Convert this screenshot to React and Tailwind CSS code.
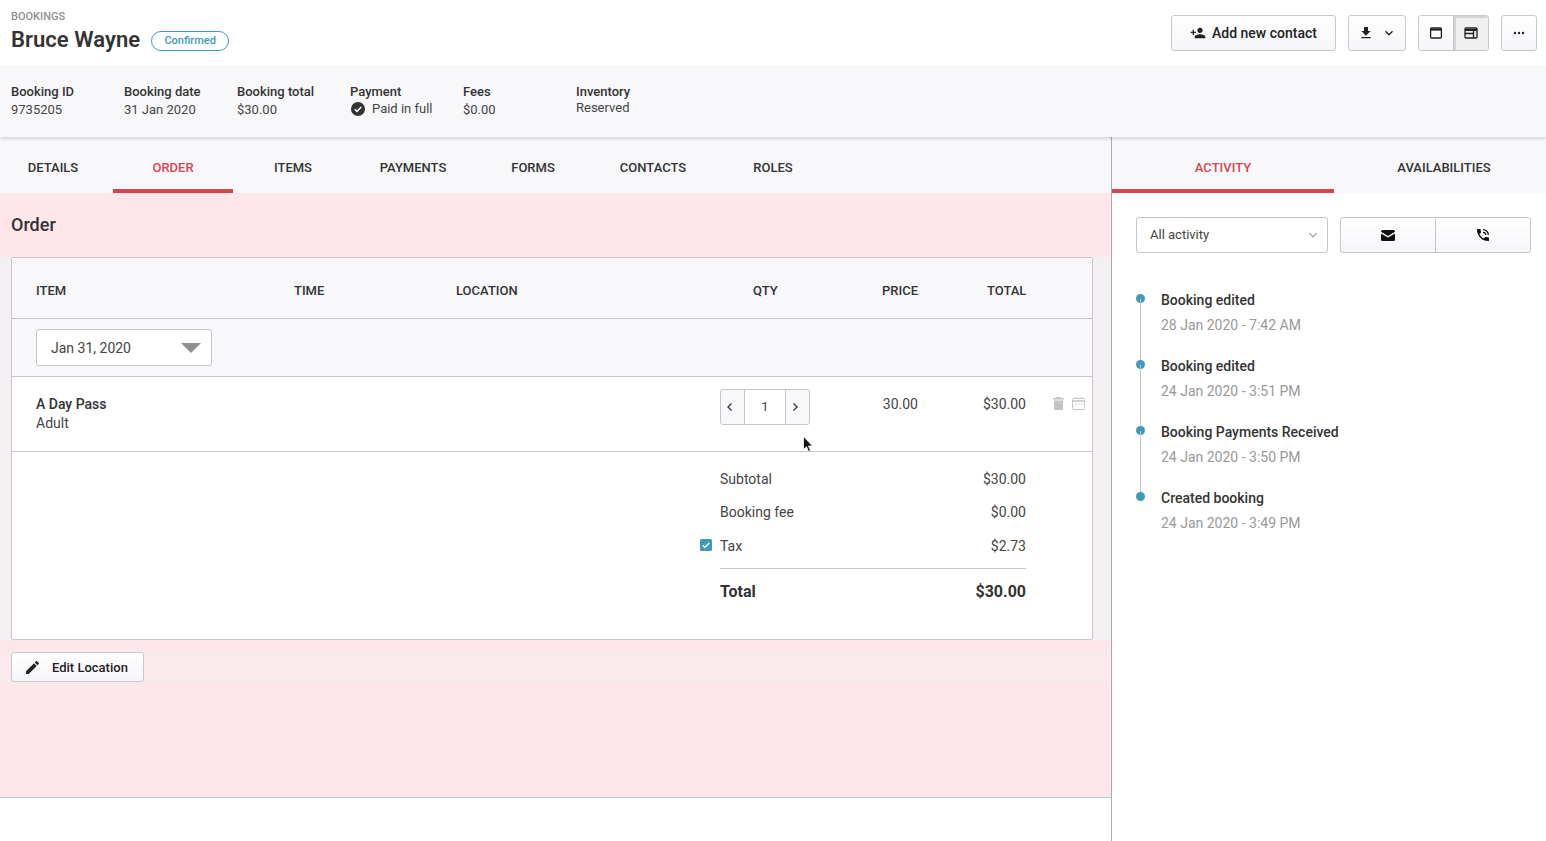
import React from "react";

function Meta({ label, children, w = "w-[113px]" }) {
  return (
    <div className={`${w} shrink-0`}>
      <div className="text-[13px] leading-[18px] font-medium text-[#333]">{label}</div>
      <div className="text-[13px] leading-[18px] text-[#444]">{children}</div>
    </div>
  );
}

function Tab({ children, active, w = "w-[120px]" }) {
  return (
    <div className={`${w} h-full flex items-center justify-center text-[13px] font-medium pt-[10px] border-b-4 ${active ? "border-[#d9434e] text-[#d9434e]" : "border-transparent text-[#333]"}`}>
      {children}
    </div>
  );
}

function Btn({ children, className = "" }) {
  return (
    <div className={`h-[36px] flex items-center justify-center border border-[#c6c8cc] rounded-[3px] bg-gradient-to-b from-white to-[#f6f6fa] ${className}`}>
      {children}
    </div>
  );
}

function Activity({ title, date, last }) {
  return (
    <div className="relative pl-[25px] h-[66px]">
      <div className="absolute left-0 top-[1px] w-[9px] h-[9px] rounded-full bg-[#3f9ab5]" />
      {!last && <div className="absolute left-[4px] top-[6px] w-px h-[66px] bg-[#c3c6cb]" />}
      <div className="text-[14px] leading-[14px] font-medium text-[#333]">{title}</div>
      <div className="mt-[11px] text-[14px] leading-[14px] text-[#999]">{date}</div>
    </div>
  );
}

function Total({ label, value, check, h = "h-[33px]" }) {
  return (
    <div className={`relative flex justify-between text-[14px] leading-[20px] text-[#444] ${h}`}>
      {check && (
        <svg className="absolute left-[-20px] top-[3px]" width="12" height="12" viewBox="0 0 12 12">
          <rect width="12" height="12" rx="1.5" fill="#3f9ab5" />
          <path d="M2.8 6.200 5 8.300 9.300 3.900" stroke="#fff" strokeWidth="1.4" fill="none" />
        </svg>
      )}
      <span>{label}</span>
      <span>{value}</span>
    </div>
  );
}

export default function App() {
  return (
    <div className="relative w-[1546px] h-[841px] overflow-hidden bg-white text-[#333] font-['Roboto',sans-serif]">
      {/* Header */}
      <header className="h-[65px] flex justify-between pl-[11px] pr-[9px] pt-[10px]">
        <div>
          <div className="text-[11px] leading-[13px] font-medium text-[#8f8f8f]">BOOKINGS</div>
          <div className="flex items-center mt-[2px]">
            <h1 className="text-[22px] leading-[29px] font-semibold tracking-[0.05px] text-[#333]">Bruce Wayne</h1>
            <span className="ml-[11px] mt-[3px] h-[20px] w-[78px] flex items-center justify-center rounded-full border border-[#3f9ab5] text-[11px] font-medium text-[#3f9ab5]">Confirmed</span>
          </div>
        </div>
        <div className="flex pt-[5px]">
          <Btn className="w-[165px] gap-[6px] text-[14px] font-medium text-[#222]">
            <svg width="16" height="16" viewBox="0 0 24 24" fill="#222"><path d="M15 12c2.200 0 4-1.800 4-4s-1.800-4-4-4-4 1.800-4 4 1.800 4 4 4zm-9-2V7H4v3H1v2h3v3h2v-3h3v-2H6zm9 4c-2.700 0-8 1.300-8 4v2h16v-2c0-2.700-5.300-4-8-4z" /></svg>
            Add new contact
          </Btn>
          <Btn className="w-[58px] ml-[12px] gap-[10px] pr-[3px]">
            <svg width="16" height="16" viewBox="0 0 24 24" fill="#222"><path d="M19 9h-4V3H9v6H5l7 7 7-7zM5 18v2h14v-2H5z" /></svg>
            <svg width="10" height="10" viewBox="0 0 10 10" fill="none" stroke="#222" strokeWidth="1.3"><path d="M1.500 3.200 5 6.800l3.500-3.600" /></svg>
          </Btn>
          <div className="flex ml-[12px] h-[36px] w-[71px] rounded-[3px] border border-[#c6c8cc]">
            <div className="flex-1 flex items-center justify-center bg-gradient-to-b from-white to-[#f6f6fa] rounded-l-[3px]">
              <svg width="14" height="12" viewBox="0 0 14 12" fill="none" stroke="#222" strokeWidth="1.3"><rect x="1.600" y="1" width="10.800" height="10" rx="1" /><path d="M1.600 2.600h10.800" strokeWidth="2" /></svg>
            </div>
            <div className="flex-1 flex items-center justify-center bg-[#f0f0f0] border-l border-[#c6c8cc] shadow-[inset_2px_2px_1px_rgba(0,0,0,0.12)] rounded-r-[3px]">
              <svg width="14" height="12" viewBox="0 0 14 12" fill="none" stroke="#222" strokeWidth="1.3"><rect x="1" y="1" width="12" height="10" rx="1" /><path d="M1 3h12" strokeWidth="2" /><path d="M1 6.500h8.500M9.500 3v8" /></svg>
            </div>
          </div>
          <Btn className="w-[36px] ml-[12px]">
            <svg width="12" height="4" viewBox="0 0 12 4" fill="#222"><circle cx="2" cy="2" r="1.200" /><circle cx="6" cy="2" r="1.200" /><circle cx="10" cy="2" r="1.200" /></svg>
          </Btn>
        </div>
      </header>

      {/* Meta */}
      <section className="relative z-10 h-[72px] bg-[#f8f8fb] shadow-[0_2px_3px_rgba(0,0,0,0.14)] flex pl-[11px] pt-[18px]">
        <Meta label="Booking ID">9735205</Meta>
        <Meta label="Booking date">31 Jan 2020</Meta>
        <Meta label="Booking total">$30.00</Meta>
        <div className="w-[113px] shrink-0">
          <div className="text-[13px] leading-[18px] font-medium text-[#333]">Payment</div>
          <div className="flex items-center text-[13px] leading-[16px] text-[#444]">
            <svg className="ml-[1px] mr-[7px]" width="14" height="14" viewBox="0 0 14 14">
              <circle cx="7" cy="7" r="7" fill="#333" />
              <path d="M3.800 7.200 6 9.400l4.200-4.400" stroke="#fff" strokeWidth="1.500" fill="none" />
            </svg>
            Paid in full
          </div>
        </div>
        <Meta label="Fees">$0.00</Meta>
        <div className="shrink-0">
          <div className="text-[13px] leading-[18px] font-medium text-[#333]">Inventory</div>
          <div className="text-[13px] leading-[14px] text-[#444]">Reserved</div>
        </div>
      </section>

      {/* Body */}
      <div className="flex h-[704px]">
        {/* Left */}
        <main className="w-[1112px] shrink-0 border-r border-[#a9acb2] flex flex-col">
          <nav className="h-[56px] shrink-0 bg-[#f8f8fb] flex -ml-[7px]">
            <Tab>DETAILS</Tab>
            <Tab active>ORDER</Tab>
            <Tab>ITEMS</Tab>
            <Tab>PAYMENTS</Tab>
            <Tab>FORMS</Tab>
            <Tab>CONTACTS</Tab>
            <Tab>ROLES</Tab>
          </nav>
          <div className="h-[605px] shrink-0 bg-[#fde7eb] border-b border-[#bcc6ca] flex flex-col">
            <h2 className="pl-[11px] pt-[21px] h-[64px] shrink-0 text-[18px] leading-[22px] font-medium text-[#333]">Order</h2>
            {/* Card row */}
            <div className="flex h-[383px] shrink-0 bg-[#f3eff3]">
              <div className="ml-[11px] w-[1082px] h-full bg-white border border-[#c3c6cb] rounded-[2px] flex flex-col">
                <div className="h-[61px] shrink-0 bg-[#f8f8fb] border-b border-[#c3c6cb] grid grid-cols-[258px_162px_297px_100px_134px_90px] pl-[24px] items-center text-[13px] font-medium text-[#333] pt-[6px]">
                  <span>ITEM</span>
                  <span>TIME</span>
                  <span>LOCATION</span>
                  <span>QTY</span>
                  <span className="pl-[29px]">PRICE</span>
                  <span>TOTAL</span>
                </div>
                <div className="h-[58px] shrink-0 bg-[#f8f8fb] border-b border-[#c3c6cb] pl-[24px] pt-[10px]">
                  <div className="w-[176px] h-[37px] bg-white border border-[#c3c6cb] rounded-[3px] flex items-center justify-between pl-[14px] pr-[10px] text-[14px] text-[#444]">
                    <span className="pt-[1px]">Jan 31, 2020</span>
                    <svg width="20" height="10" viewBox="0 0 20 10" fill="#8f8f8f"><path d="M0 0h20L10 10z" /></svg>
                  </div>
                </div>
                <div className="h-[75px] shrink-0 border-b border-[#c3c6cb] flex pl-[24px]">
                  <div className="w-[684px] pt-[18px] text-[14px] leading-[19px]">
                    <div className="font-medium text-[#333]">A Day Pass</div>
                    <div className="text-[#444]">Adult</div>
                  </div>
                  <div className="mt-[12px] h-[36px] w-[90px] flex border border-[#c3c6cb] rounded-[3px]">
                    <div className="w-[24px] flex items-center justify-center pr-[6px] bg-[#f8f8fb] border-r border-[#c3c6cb] rounded-l-[3px]">
                      <svg width="8" height="10" viewBox="0 0 8 10" fill="none" stroke="#333" strokeWidth="1.300"><path d="M5.500 1.500 2 5l3.500 3.500" /></svg>
                    </div>
                    <div className="flex-1 flex items-center justify-center text-[13px] text-[#444]">1</div>
                    <div className="w-[24px] flex items-center justify-center pr-[6px] bg-[#f8f8fb] border-l border-[#c3c6cb] rounded-r-[3px]">
                      <svg width="8" height="10" viewBox="0 0 8 10" fill="none" stroke="#333" strokeWidth="1.300"><path d="M2.500 1.500 6 5 2.500 8.500" /></svg>
                    </div>
                  </div>
                  <div className="w-[108px] pt-[18px] text-right text-[14px] leading-[19px] text-[#444]">30.00</div>
                  <div className="w-[108px] pt-[18px] text-right text-[14px] leading-[19px] text-[#444]">$30.00</div>
                  <div className="ml-[27px] pt-[20px] flex gap-[8px] items-start">
                    <svg width="11" height="13" viewBox="0 0 11 13" fill="#c4c4c4"><path d="M3.500 0h4l.5 1h3v1.500H0V1h3zM1 3.500h9V12a1 1 0 0 1-1 1H2a1 1 0 0 1-1-1z" /></svg>
                    <svg width="13" height="13" viewBox="0 0 13 13" fill="none" stroke="#c4c4c4"><rect x=".5" y="1.500" width="12" height="11" rx="1" /><path d="M.5 4h12" strokeWidth="1.500" /><path d="M3 0v2M10 0v2" /><path d="M3 7h1.500M6 7h1.500M9 7h1.500" /></svg>
                  </div>
                </div>
                <div className="flex-1 pl-[708px] pr-[66px] pt-[17px]">
                  <Total label="Subtotal" value="$30.00" />
                  <Total label="Booking fee" value="$0.00" h="h-[34px]" />
                  <Total label="Tax" value="$2.73" check />
                  <div className="mt-[-1px] border-t border-[#c3c6cb] pt-[13px] flex justify-between text-[16px] leading-[20px] font-bold text-[#333]">
                    <span>Total</span>
                    <span>$30.00</span>
                  </div>
                </div>
              </div>
            </div>
            {/* Action row */}
            <div className="mt-[12px] h-[30px] shrink-0 flex bg-[#fae9ed]">
              <div className="ml-[11px] w-[133px] h-full flex items-center border border-[#c6c8cc] rounded-[3px] bg-gradient-to-b from-white to-[#f6f6fa] pl-[14px] gap-[13px] text-[13px] font-medium text-[#222]">
                <svg width="13" height="13" viewBox="3 3 18 18" fill="#222"><path d="M3 17.250V21h3.750L17.810 9.940l-3.750-3.750L3 17.250zM20.710 7.040a1 1 0 0 0 0-1.410l-2.340-2.340a1 1 0 0 0-1.410 0l-1.830 1.830 3.750 3.750 1.830-1.830z" /></svg>
                <span className="pt-[1px]">Edit Location</span>
              </div>
            </div>
          </div>
        </main>

        {/* Right */}
        <aside className="flex-1">
          <nav className="h-[56px] bg-[#f8f8fb] flex">
            <Tab active w="w-[222px]">ACTIVITY</Tab>
            <Tab w="w-[220px]">AVAILABILITIES</Tab>
          </nav>
          <div className="pl-[24px] pr-[15px] pt-[24px]">
            <div className="flex gap-[12px]">
              <div className="w-[192px] h-[36px] flex items-center justify-between pl-[13px] pr-[9px] border border-[#c3c6cb] rounded-[3px] text-[13px] text-[#444]">
                All activity
                <svg width="10" height="10" viewBox="0 0 10 10" fill="none" stroke="#8f8f8f" strokeWidth="1.100"><path d="M1.500 3.200 5 6.800l3.500-3.600" /></svg>
              </div>
              <div className="w-[191px] h-[36px] flex border border-[#c3c6cb] rounded-[3px] bg-gradient-to-b from-white to-[#f6f6fa]">
                <div className="flex-1 flex items-center justify-center border-r border-[#c3c6cb]">
                  <svg width="14" height="11" viewBox="0 0 14 11" fill="#111"><path d="M1.500 0h11A1.500 1.500 0 0 1 14 1.500v.3L7 6 0 1.800v-.3A1.500 1.500 0 0 1 1.500 0zM0 3.400 7 7.600l7-4.200v6.100a1.500 1.500 0 0 1-1.500 1.500h-11A1.500 1.500 0 0 1 0 9.500z" /></svg>
                </div>
                <div className="flex-1 flex items-center justify-center">
                  <svg width="16" height="16" viewBox="0 0 24 24" fill="#111"><path d="M20 15.500c-1.250 0-2.450-.2-3.570-.57a1 1 0 0 0-1.020.24l-2.200 2.200a15.050 15.050 0 0 1-6.590-6.590l2.200-2.210a1 1 0 0 0 .25-1.010A11.400 11.400 0 0 1 8.500 4a1 1 0 0 0-1-1H4a1 1 0 0 0-1 1c0 9.390 7.610 17 17 17a1 1 0 0 0 1-1v-3.500a1 1 0 0 0-1-1zM19 12h2a9 9 0 0 0-9-9v2a7 7 0 0 1 7 7zm-4 0h2a5 5 0 0 0-5-5v2a3 3 0 0 1 3 3z" /></svg>
                </div>
              </div>
            </div>
            <div className="mt-[40px]">
              <Activity title="Booking edited" date="28 Jan 2020 - 7:42 AM" />
              <Activity title="Booking edited" date="24 Jan 2020 - 3:51 PM" />
              <Activity title="Booking Payments Received" date="24 Jan 2020 - 3:50 PM" />
              <Activity title="Created booking" date="24 Jan 2020 - 3:49 PM" last />
            </div>
          </div>
        </aside>
      </div>

      {/* Cursor */}
      <svg className="absolute left-[803px] top-[436px] z-20" width="11" height="17" viewBox="0 0 11 17">
        <path d="M.5.500v13l3-2.800 2 4.800 2-.9-2-4.600h4z" fill="#111" stroke="#fff" strokeWidth=".8" />
      </svg>
    </div>
  );
}
